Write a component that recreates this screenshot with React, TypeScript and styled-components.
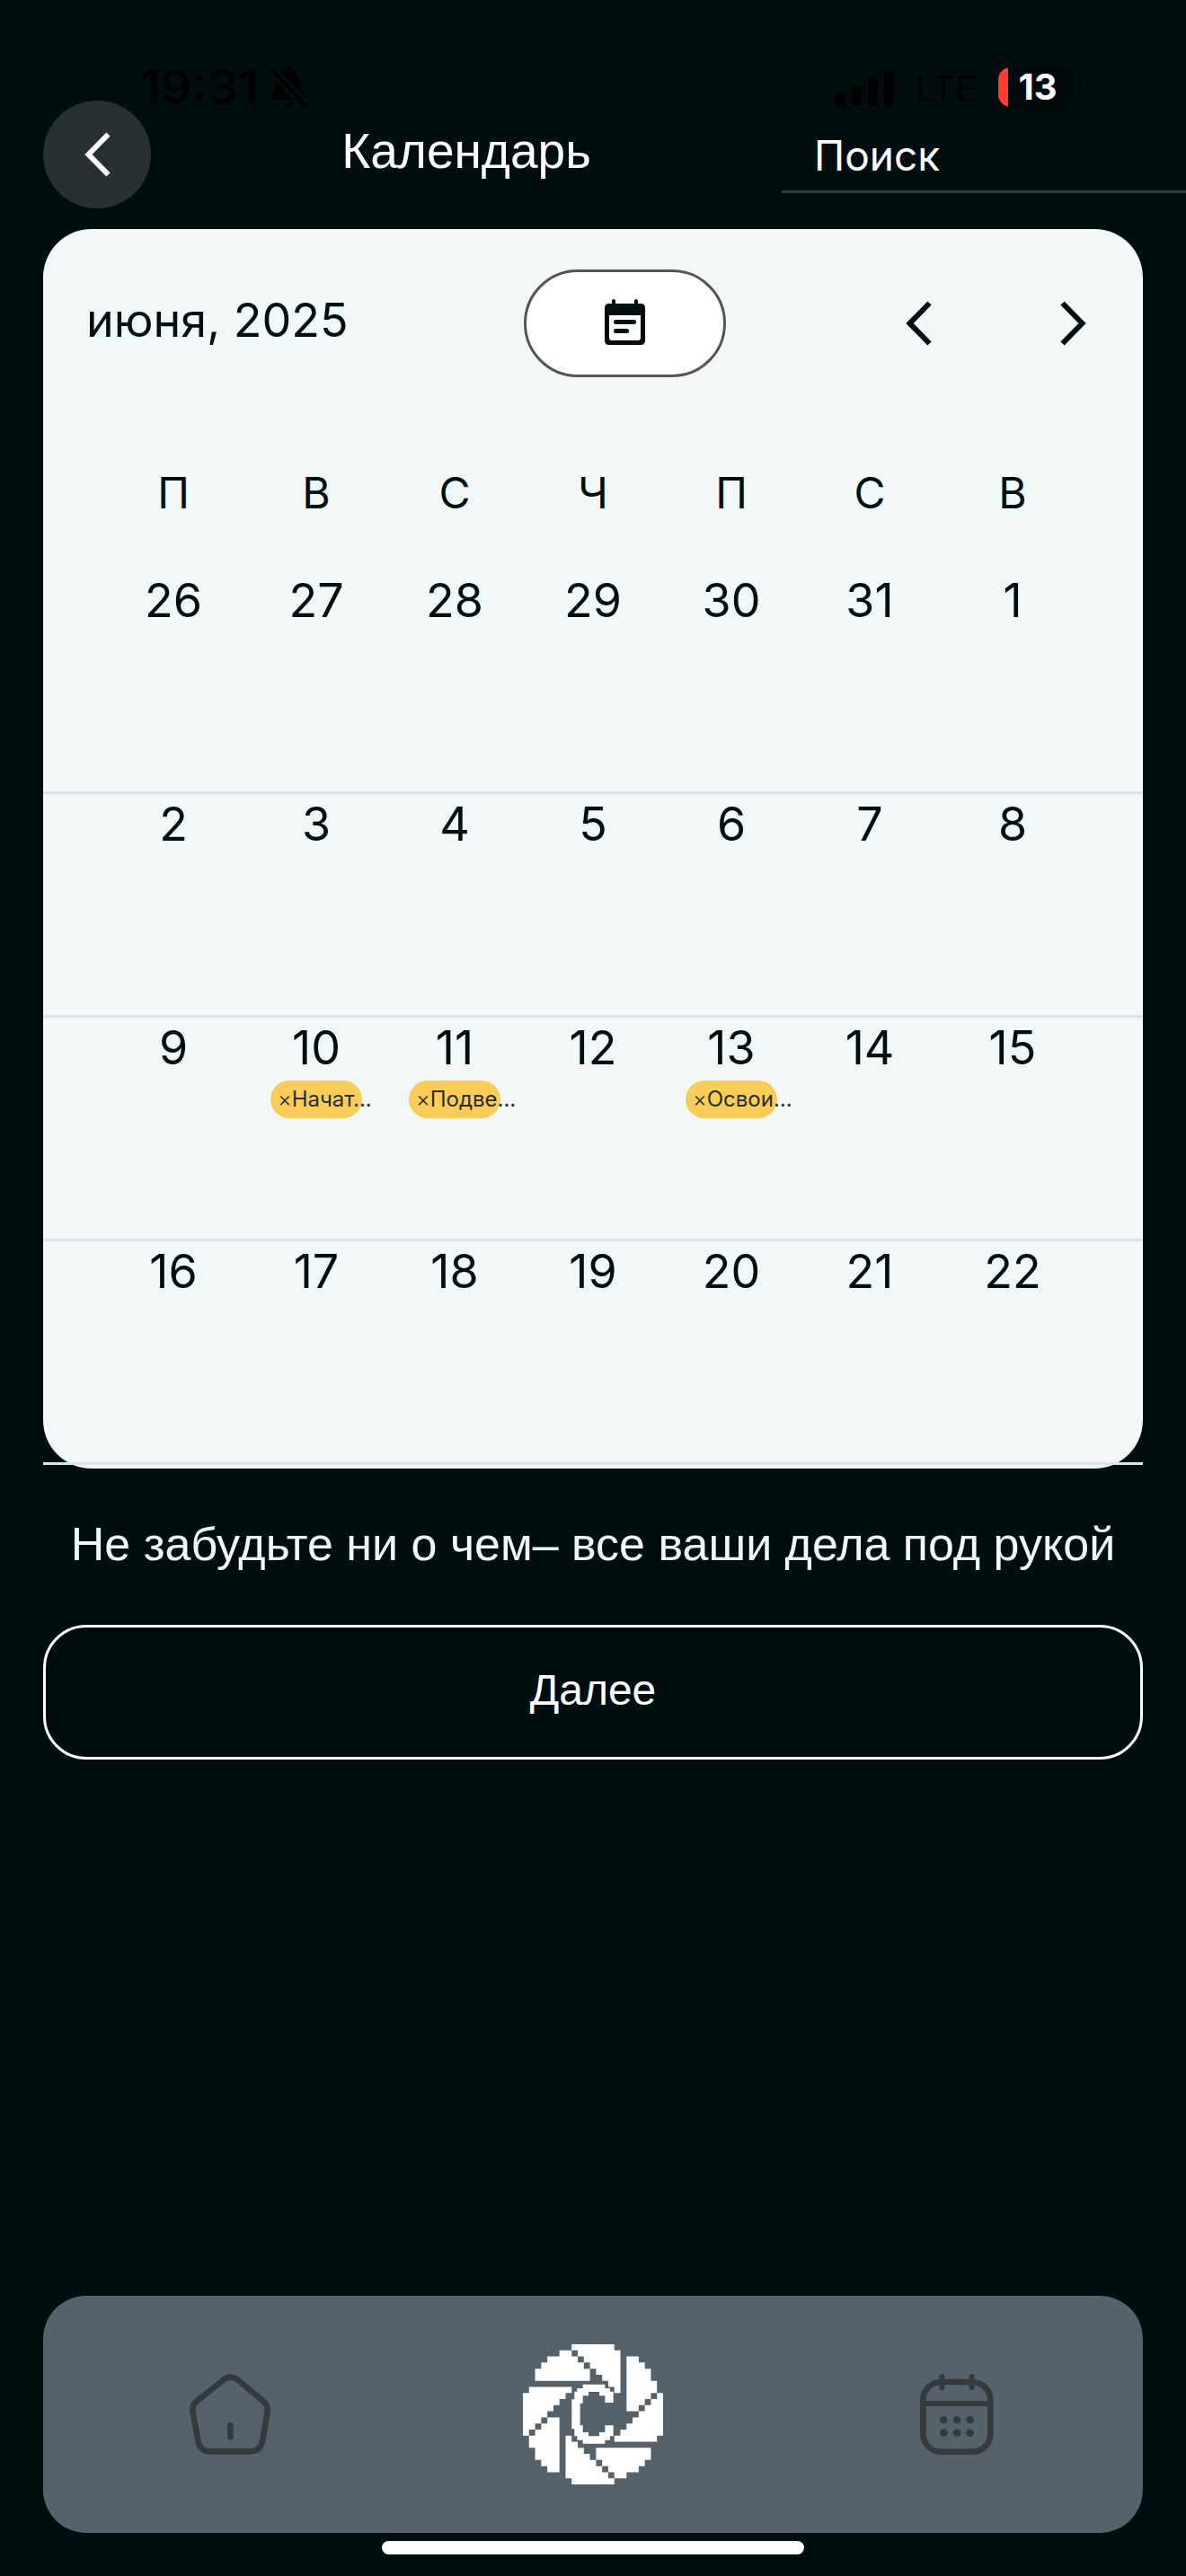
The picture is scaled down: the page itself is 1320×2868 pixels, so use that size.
import React from "react";
import styled, { createGlobalStyle } from "styled-components";

const ink = "#000e0f";
const paper = "#f2f7f7";
const uiFont = `Inter, "Noto Sans", sans-serif`;
const textFont = `"Liberation Sans", Arial, sans-serif`;

const GlobalStyle = createGlobalStyle`
  *, *::before, *::after { box-sizing: border-box; }
  body { margin: 0; background: ${ink}; }
  button, input { font: inherit; color: inherit; margin: 0; }
  button { cursor: pointer; padding: 0; border: 0; background: none; }
  svg { display: block; }
`;

const Screen = styled.div`
  position: relative;
  min-height: 100vh;
  display: flex;
  flex-direction: column;
  padding-bottom: 24px;
  background: ${ink};
  color: ${paper};
  font-family: ${uiFont};
`;

const StatusBar = styled.div`
  position: absolute;
  top: 72px;
  left: 0;
  right: 0;
  height: 50px;
  padding: 0 116px 0 156px;
  display: flex;
  align-items: center;
  color: #000;
  pointer-events: none;
`;

const Clock = styled.span`
  font-size: 54px;
  font-weight: 600;
  line-height: 52px;
  margin-right: 12px;
`;

const StatusRight = styled.div`
  margin-left: auto;
  display: flex;
  align-items: center;
`;

const Network = styled.span`
  margin: 4px 24px 0 22px;
  font-size: 40px;
  line-height: 48px;
`;

const Battery = styled.span`
  width: 84px;
  height: 44px;
  padding-left: 4px;
  border-radius: 14px;
  display: flex;
  align-items: center;
  justify-content: center;
  background: linear-gradient(90deg, #ff3b30 11px, #000809 11px);
  color: #fff;
  font-size: 40px;
  font-weight: 700;
  line-height: 44px;
`;

const BatteryTip = styled.span`
  width: 4px;
  height: 14px;
  margin-left: 5px;
  border-radius: 0 4px 4px 0;
  background: #000809;
`;

const Header = styled.header`
  display: flex;
  align-items: center;
  margin-top: 112px;
  padding-left: 48px;
`;

const BackButton = styled.button`
  flex: none;
  width: 120px;
  height: 120px;
  border-radius: 50%;
  display: grid;
  place-items: center;
  background: #282f32;
  color: #fff;
`;

const Title = styled.h1`
  flex: 1;
  margin: 0;
  padding-bottom: 8px;
  font-family: ${textFont};
  font-size: 55px;
  font-weight: 400;
  line-height: 66px;
  text-align: center;
  color: #fff;
`;

const SearchInput = styled.input`
  width: 450px;
  height: 86px;
  padding: 4px 36px 0;
  border: 0;
  border-bottom: 3px solid #27423f;
  border-radius: 0;
  outline: 0;
  background: none;
  font-size: 46px;
  color: #fff;
  &::placeholder { color: #fff; opacity: 1; }
`;

const Content = styled.main`
  margin: 23px 48px 0;
`;

const CalendarCard = styled.section`
  padding-bottom: 4px;
  border-radius: 54px;
  background: ${paper};
  color: ${ink};
`;

const CardHeader = styled.div`
  display: flex;
  align-items: center;
  padding: 45px 48px 42px;
`;

const Month = styled.h2`
  margin: 0;
  padding-bottom: 6px;
  font-size: 52px;
  font-weight: 400;
  line-height: 66px;
`;

const TodayButton = styled.button`
  width: 225px;
  height: 120px;
  margin-left: auto;
  padding-bottom: 4px;
  border: 3px solid #555;
  border-radius: 60px;
  display: grid;
  place-items: center;
  background: #fff;
`;

const Pager = styled.div`
  display: flex;
  gap: 112px;
  margin-left: 184px;
`;

const PagerButton = styled.button`
  width: 60px;
  height: 120px;
  display: grid;
  place-items: center;
`;

const Table = styled.table`
  display: block;
  thead, tbody { display: block; }
`;

const Week = styled.tr<{ $head?: boolean }>`
  display: grid;
  grid-template-columns: 164fr repeat(5, 154fr) 164fr;
  height: ${(p) => (p.$head ? "173px" : "249px")};
  padding: 0 63px;
  border-bottom: ${(p) => (p.$head ? "0" : "3px solid #dfe4e8")};
`;

const Weekday = styled.th`
  padding: 0;
  font-size: 48px;
  font-weight: 400;
  line-height: 173px;
  text-align: center;
`;

const Day = styled.td`
  min-width: 0;
  padding: 0;
  display: flex;
  flex-direction: column;
  align-items: center;
  gap: 2px;
  font-size: 52px;
  line-height: 68px;
`;

const Chip = styled.button`
  width: 102px;
  height: 42px;
  padding-left: 8px;
  border-radius: 21px;
  background: #f9cd57;
  color: #272f32;
  font-size: 24px;
  line-height: 42px;
  text-align: left;
  white-space: nowrap;
`;

const ChipMark = styled.span`
  font-weight: 300;
`;

const Tagline = styled.p`
  margin: 51px 0 57px;
  font-family: ${textFont};
  font-size: 52px;
  line-height: 66px;
  text-align: center;
`;

const NextButton = styled.button`
  display: block;
  width: 100%;
  height: 150px;
  padding-bottom: 6px;
  border: 3px solid #fff;
  border-radius: 48px;
  font-family: ${textFont};
  font-size: 48px;
  color: #fff;
`;

const TabBar = styled.nav`
  display: grid;
  grid-template-columns: 1fr auto 1fr;
  align-items: center;
  height: 264px;
  margin: auto 48px 0;
  border-radius: 48px;
  background: #56626b;
`;

const Tab = styled.a`
  display: grid;
  justify-content: center;
  color: #353a3c;
`;

const SideTab = styled(Tab)<{ $side: "left" | "right" }>`
  ${(p) => (p.$side === "left" ? "padding-right: 119px;" : "padding-left: 119px;")}
`;

const HomeIndicator = styled.div`
  width: 470px;
  height: 15px;
  margin: 9px auto 0;
  border-radius: 8px;
  background: #fff;
`;

const Chevron = ({ flip = false }: { flip?: boolean }) => (
  <svg width="29" height="50" viewBox="0 0 29 50" fill="none" aria-hidden="true">
    <path
      d={flip ? "M2.5 2.5 24.5 25 2.5 47.5" : "M26.5 2.5 4.5 25 26.5 47.5"}
      stroke="currentColor"
      strokeWidth="6"
    />
  </svg>
);

const SilentIcon = () => (
  <svg width="42" height="46" viewBox="0 0 42 46" aria-hidden="true">
    <path d="M12 6C14 5 15 4 16 2C18-1 23-1 25 2C26 4 27 5 29 7C33 10 34 14 34 20C34 25 36 28 40 32C41 33 41 35 41 36Z" />
    <path d="M7 16 26 37H4C0 37-1 33 2 30C5 27 7 24 7 16ZM14 40H27C26 47 15 47 14 40Z" />
    <path d="M3 4 40 43" stroke="#000" strokeWidth="4" strokeLinecap="round" />
  </svg>
);

const SignalIcon = () => (
  <svg width="66" height="42" viewBox="0 0 66 42" aria-hidden="true">
    <rect x="0" y="26" width="11" height="16" rx="3" />
    <rect x="18" y="19" width="11" height="23" rx="3" />
    <rect x="36" y="10" width="11" height="32" rx="3" />
    <rect x="54" y="1" width="11" height="41" rx="3" />
  </svg>
);

const NoteIcon = () => (
  <svg width="45" height="51" viewBox="0 0 45 51" fill={ink} aria-hidden="true">
    <rect x="8" y="0" width="4" height="9" rx="2" />
    <rect x="33" y="0" width="4" height="9" rx="2" />
    <path
      fillRule="evenodd"
      d="M5 5H40Q45 5 45 10V46Q45 51 40 51H5Q0 51 0 46V10Q0 5 5 5ZM5 18V43Q5 46 8 46H37Q40 46 40 43V18Z"
    />
    <rect x="10" y="23" width="25" height="5" rx="2.5" />
    <rect x="10" y="33" width="17" height="5" rx="2.5" />
  </svg>
);

const HomeIcon = () => (
  <svg width="90" height="90" viewBox="0 0 270 270" fill="none" stroke="currentColor" aria-hidden="true">
    <path
      d="M112 21Q135 1 160 19L244 89Q262 103 260 124L244 222Q237 259 202 259H68Q34 259 28 222L10 124Q8 103 26 89Z"
      strokeWidth="20"
    />
    <path d="M136 172V211" strokeWidth="20" strokeLinecap="round" />
  </svg>
);

const CalendarIcon = () => (
  <svg width="82" height="90" viewBox="0 0 246 270" fill="none" stroke="currentColor" aria-hidden="true">
    <rect x="10" y="27" width="225" height="233" rx="60" strokeWidth="20" />
    <path d="M10 99H235" strokeWidth="18" />
    <path d="M73 9V46M173 9V46" strokeWidth="18" strokeLinecap="round" />
    <g fill="currentColor" stroke="none">
      {[153, 197].map((y) => [79, 123, 167].map((x) => <circle key={`${x}-${y}`} cx={x} cy={y} r="13" />))}
    </g>
  </svg>
);

const ApertureLogo = () => (
  <svg width="156" height="156" viewBox="0 0 468 468" fill="#fff" aria-hidden="true">
    {[0, 90, 180, 270].map((angle) => (
      <g key={angle} transform={`rotate(${angle} 234 234) scale(20.348)`}>
        <path d="M6 1H8V2H9V3H10V4H11V6H2V4H3V3H4V2H6Z" />
        <path d="M8 0H15V1H16V8H15V7H14V6H13V5H12V4H11V3H10V2H9V1H8Z" />
      </g>
    ))}
    <path
      transform="translate(-66 -90)"
      d="M266 224H340V237H357V248H368V285H340V262H321V249H285V262H266V287H257V361H266V384H285V397H321V384H340V361H368V397H357V410H340V422H266V410H247V397H238V373H229V274H238V248H247V237H266Z"
    />
  </svg>
);

const weekdays = [
  ["П", "Понедельник"],
  ["В", "Вторник"],
  ["С", "Среда"],
  ["Ч", "Четверг"],
  ["П", "Пятница"],
  ["С", "Суббота"],
  ["В", "Воскресенье"],
];

const weeks = [
  [26, 27, 28, 29, 30, 31, 1],
  [2, 3, 4, 5, 6, 7, 8],
  [9, 10, 11, 12, 13, 14, 15],
  [16, 17, 18, 19, 20, 21, 22],
];

const events: Record<number, string> = {
  10: "Начат...",
  11: "Подве...",
  13: "Освои...",
};

export default function App() {
  return (
    <Screen>
      <GlobalStyle />
      <Header>
        <BackButton type="button" aria-label="Назад">
          <Chevron />
        </BackButton>
        <Title>Календарь</Title>
        <SearchInput type="search" placeholder="Поиск" aria-label="Поиск" />
      </Header>
      <StatusBar>
        <Clock>19:31</Clock>
        <SilentIcon />
        <StatusRight>
          <SignalIcon />
          <Network>LTE</Network>
          <Battery>13</Battery>
          <BatteryTip />
        </StatusRight>
      </StatusBar>

      <Content>
        <CalendarCard>
          <CardHeader>
            <Month>июня, 2025</Month>
            <TodayButton type="button" aria-label="Сегодня">
              <NoteIcon />
            </TodayButton>
            <Pager>
              <PagerButton type="button" aria-label="Предыдущий месяц">
                <Chevron />
              </PagerButton>
              <PagerButton type="button" aria-label="Следующий месяц">
                <Chevron flip />
              </PagerButton>
            </Pager>
          </CardHeader>
          <Table>
            <thead>
              <Week $head>
                {weekdays.map(([short, full]) => (
                  <Weekday key={full} scope="col" abbr={full}>
                    {short}
                  </Weekday>
                ))}
              </Week>
            </thead>
            <tbody>
              {weeks.map((week) => (
                <Week key={week[0]}>
                  {week.map((day) => (
                    <Day key={day}>
                      {day}
                      {events[day] && (
                        <Chip type="button">
                          <ChipMark>×</ChipMark>
                          {events[day]}
                        </Chip>
                      )}
                    </Day>
                  ))}
                </Week>
              ))}
            </tbody>
          </Table>
        </CalendarCard>
        <Tagline>Не забудьте ни о чем– все ваши дела под рукой</Tagline>
        <NextButton type="button">Далее</NextButton>
      </Content>

      <TabBar>
        <SideTab $side="left" href="#home" aria-label="Главная">
          <HomeIcon />
        </SideTab>
        <Tab href="#camera" aria-label="Камера">
          <ApertureLogo />
        </Tab>
        <SideTab $side="right" href="#calendar" aria-label="Календарь">
          <CalendarIcon />
        </SideTab>
      </TabBar>
      <HomeIndicator />
    </Screen>
  );
}
